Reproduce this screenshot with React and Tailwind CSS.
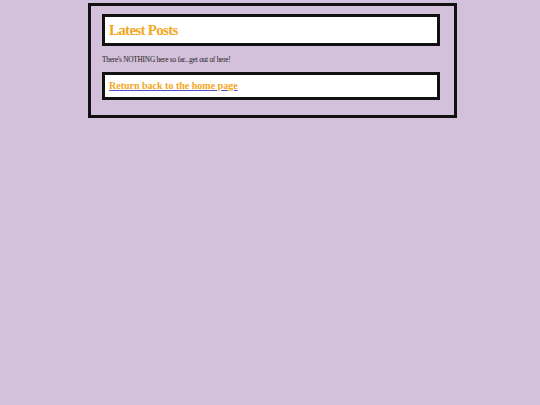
export default function App() {
  return (
    <div className="min-h-[405px] w-full bg-[#d3c0da] pt-[3px]" style={{ fontFamily: '"Liberation Serif", "Times New Roman", serif' }}>
      <div className="ml-[88px] h-[115px] w-[369px] border-[3px] border-[#111] pl-[11px] pr-[14px] pt-[8px]">
        <div className="flex h-[32px] items-center border-[3px] border-[#111] bg-white px-[4px]">
          <h1 className="text-[15px] font-bold leading-none tracking-[-0.7px] text-[#f5a623]">Latest Posts</h1>
        </div>
        <p className="mt-[9px] text-[7.3px] leading-[10px] tracking-[-0.22px] text-[#222]">There's NOTHING here so far...get out of here!</p>
        <div className="mt-[7px] flex h-[28px] items-center border-[3px] border-[#111] bg-white px-[4px]">
          <a href="#" className="text-[10px] font-bold leading-none text-[#f5a623] underline decoration-[#5a4fc0]">Return back to the home page</a>
        </div>
      </div>
    </div>
  );
}
